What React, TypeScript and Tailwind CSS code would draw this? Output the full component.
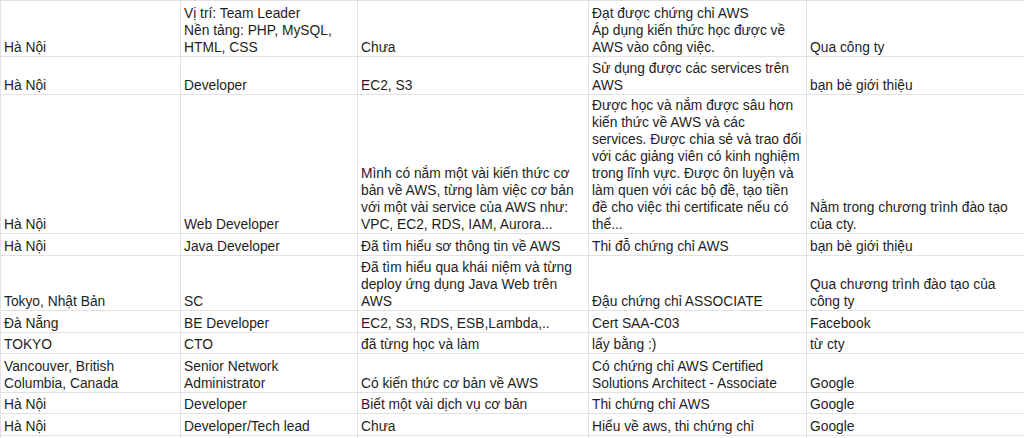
const rows: { h: string; cells: string[][] }[] = [
  {
    h: 'h-[56px]',
    cells: [
      ['Hà Nội'],
      ['Vị trí: Team Leader', 'Nền tảng: PHP, MySQL,', 'HTML, CSS'],
      ['Chưa'],
      ['Đạt được chứng chỉ AWS', 'Áp dụng kiến thức học được về', 'AWS vào công việc.'],
      ['Qua công ty'],
    ],
  },
  {
    h: 'h-[38px]',
    cells: [
      ['Hà Nội'],
      ['Developer'],
      ['EC2, S3'],
      ['Sử dụng được các services trên', 'AWS'],
      ['bạn bè giới thiệu'],
    ],
  },
  {
    h: 'h-[139px]',
    cells: [
      ['Hà Nội'],
      ['Web Developer'],
      [
        'Mình có nắm một vài kiến thức cơ',
        'bản về AWS, từng làm việc cơ bản',
        'với một vài service của AWS như:',
        'VPC, EC2, RDS, IAM, Aurora...',
      ],
      [
        'Được học và nắm được sâu hơn',
        'kiến thức về AWS và các',
        'services. Được chia sẻ và trao đổi',
        'với các giảng viên có kinh nghiệm',
        'trong lĩnh vực. Được ôn luyện và',
        'làm quen với các bộ đề, tạo tiền',
        'đề cho việc thi certificate nếu có',
        'thể...',
      ],
      ['Nằm trong chương trình đào tạo', 'của cty.'],
    ],
  },
  {
    h: 'h-[22px]',
    cells: [
      ['Hà Nội'],
      ['Java Developer'],
      ['Đã tìm hiểu sơ thông tin về AWS'],
      ['Thi đỗ chứng chỉ AWS'],
      ['bạn bè giới thiệu'],
    ],
  },
  {
    h: 'h-[55px]',
    cells: [
      ['Tokyo, Nhật Bản'],
      ['SC'],
      ['Đã tìm hiểu qua khái niệm và từng', 'deploy ứng dụng Java Web trên', 'AWS'],
      ['Đậu chứng chỉ ASSOCIATE'],
      ['Qua chương trình đào tạo của', 'công ty'],
    ],
  },
  {
    h: 'h-[22px]',
    cells: [['Đà Nẵng'], ['BE Developer'], ['EC2, S3, RDS, ESB,Lambda,..'], ['Cert SAA-C03'], ['Facebook']],
  },
  {
    h: 'h-[21px]',
    cells: [['TOKYO'], ['CTO'], ['đã từng học và làm'], ['lấy bằng :)'], ['từ cty']],
  },
  {
    h: 'h-[39px]',
    cells: [
      ['Vancouver, British', 'Columbia, Canada'],
      ['Senior Network', 'Administrator'],
      ['Có kiến thức cơ bản về AWS'],
      ['Có chứng chỉ AWS Certified', 'Solutions Architect - Associate'],
      ['Google'],
    ],
  },
  {
    h: 'h-[21px]',
    cells: [['Hà Nội'], ['Developer'], ['Biết một vài dịch vụ cơ bản'], ['Thi chứng chỉ AWS'], ['Google']],
  },
  {
    h: 'h-[22px]',
    cells: [['Hà Nội'], ['Developer/Tech lead'], ['Chưa'], ['Hiểu về aws, thi chứng chỉ'], ['Google']],
  },
  {
    h: 'h-[22px]',
    cells: [[''], [''], [''], [''], ['']],
  },
];

const colWidths = ['w-[180px]', 'w-[177px]', 'w-[231px]', 'w-[218px]', 'flex-1'];

export default function App() {
  return (
    <div className="w-[1024px] h-[438px] overflow-hidden bg-white text-[#1e1e1e] text-[13.8px] leading-[17px] font-['Liberation_Sans',Arial,sans-serif]">
      <div className="w-[1300px] border-t border-l border-[#e2e2e2]">
        {rows.map((row, i) => (
          <div key={i} className={`flex border-b border-[#e2e2e2] ${row.h}`}>
            {row.cells.map((lines, j) => (
              <div
                key={j}
                className={`${colWidths[j]} shrink-0 flex flex-col justify-end px-[3px] pb-0 whitespace-nowrap overflow-hidden ${
                  j < 4 ? 'border-r border-[#e2e2e2]' : ''
                }`}
              >
                {lines.map((line, k) => (
                  <div key={k}>{line}</div>
                ))}
              </div>
            ))}
          </div>
        ))}
      </div>
    </div>
  );
}
